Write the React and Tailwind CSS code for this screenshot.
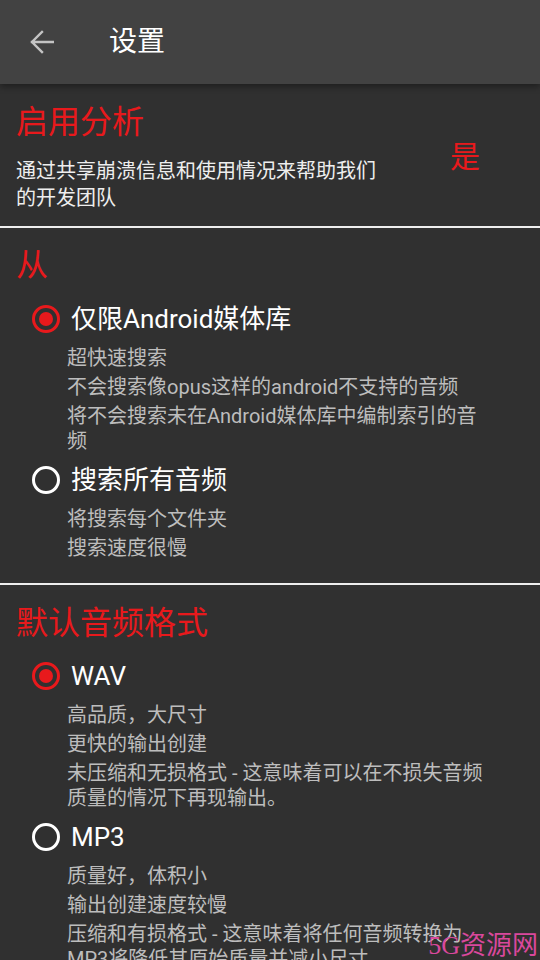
import React from 'react';

const RED = 'text-[#e8191c]';

const Radio = ({ checked }) =>
  checked ? (
    <div className="w-[28px] h-[28px] rounded-full border-[3px] border-[#e8191c] flex items-center justify-center shrink-0">
      <div className="w-[14px] h-[14px] rounded-full bg-[#e8191c]" />
    </div>
  ) : (
    <div className="w-[28px] h-[28px] rounded-full border-[3px] border-white shrink-0" />
  );

const Option = ({ checked, label, lines }) => (
  <div>
    <div className="flex items-center gap-[11px] ml-4 h-[36px]">
      <Radio checked={checked} />
      <span className="text-[26px] leading-[36px] text-white">{label}</span>
    </div>
    <div className="mt-[9px] ml-[51px] pr-[28px] flex flex-col gap-1">
      {lines.map((l, i) => (
        <p key={i} className="text-[20px] leading-[25px] text-[#bdbdbd]">{l}</p>
      ))}
    </div>
  </div>
);

const Divider = () => <div className="h-[2px] bg-[#eeeeee]" />;

export default function App() {
  return (
    <div
      className="w-[540px] h-[960px] overflow-hidden bg-[#303030] relative"
      style={{ fontFamily: 'Roboto, "Noto Sans CJK SC", sans-serif' }}
    >
      {/* app bar */}
      <header className="h-[84px] bg-[#424242] flex items-center shadow-[0_3px_6px_rgba(0,0,0,0.35)] relative z-10">
        <div className="ml-[30px] w-[24px] h-[24px]">
          <svg width="24" height="24" viewBox="0 0 24 24" fill="none" stroke="#c4c4c4" strokeWidth="2.4" strokeLinecap="square">
            <path d="M2 12H23M12 2L2 12L12 22" />
          </svg>
        </div>
        <h1 className="ml-[55px] text-[28px] text-white leading-none">设置</h1>
      </header>

      {/* analytics */}
      <section className="flex items-center px-4 pt-[18px] pb-[14px]">
        <div className="w-[372px] shrink-0">
          <h2 className={`text-[32px] leading-[40px] ${RED}`}>启用分析</h2>
          <p className="mt-4 text-[20px] leading-[27px] text-[#eeeeee]">
            通过共享崩溃信息和使用情况来帮助我们的开发团队
          </p>
        </div>
        <div className="ml-[62px] text-[30px] leading-none">
          <span className={RED}>是</span>
        </div>
      </section>
      <Divider />

      {/* source */}
      <section className="px-4 pt-[17px] pb-[22px]">
        <h2 className={`text-[32px] leading-[40px] ${RED}`}>从</h2>
        <div className="mt-4 flex flex-col gap-2">
          <Option
            checked
            label="仅限Android媒体库"
            lines={['超快速搜索', '不会搜索像opus这样的android不支持的音频', '将不会搜索未在Android媒体库中编制索引的音频']}
          />
          <Option checked={false} label="搜索所有音频" lines={['将搜索每个文件夹', '搜索速度很慢']} />
        </div>
      </section>
      <Divider />

      {/* format */}
      <section className="px-4 pt-[18px]">
        <h2 className={`text-[32px] leading-[40px] ${RED}`}>默认音频格式</h2>
        <div className="mt-[15px] flex flex-col gap-2">
          <Option
            checked
            label="WAV"
            lines={['高品质，大尺寸', '更快的输出创建', '未压缩和无损格式 - 这意味着可以在不损失音频质量的情况下再现输出。']}
          />
          <Option
            checked={false}
            label="MP3"
            lines={['质量好，体积小', '输出创建速度较慢', '压缩和有损格式 - 这意味着将任何音频转换为MP3将降低其原始质量并减小尺寸。']}
          />
        </div>
      </section>

      <div
        className="absolute right-[2px] bottom-[1px] text-[26px] leading-none text-[#d9489c]"
        style={{ fontFamily: '"Liberation Serif", "Noto Sans CJK SC", serif' }}
      >
        5G资源网
      </div>
    </div>
  );
}
